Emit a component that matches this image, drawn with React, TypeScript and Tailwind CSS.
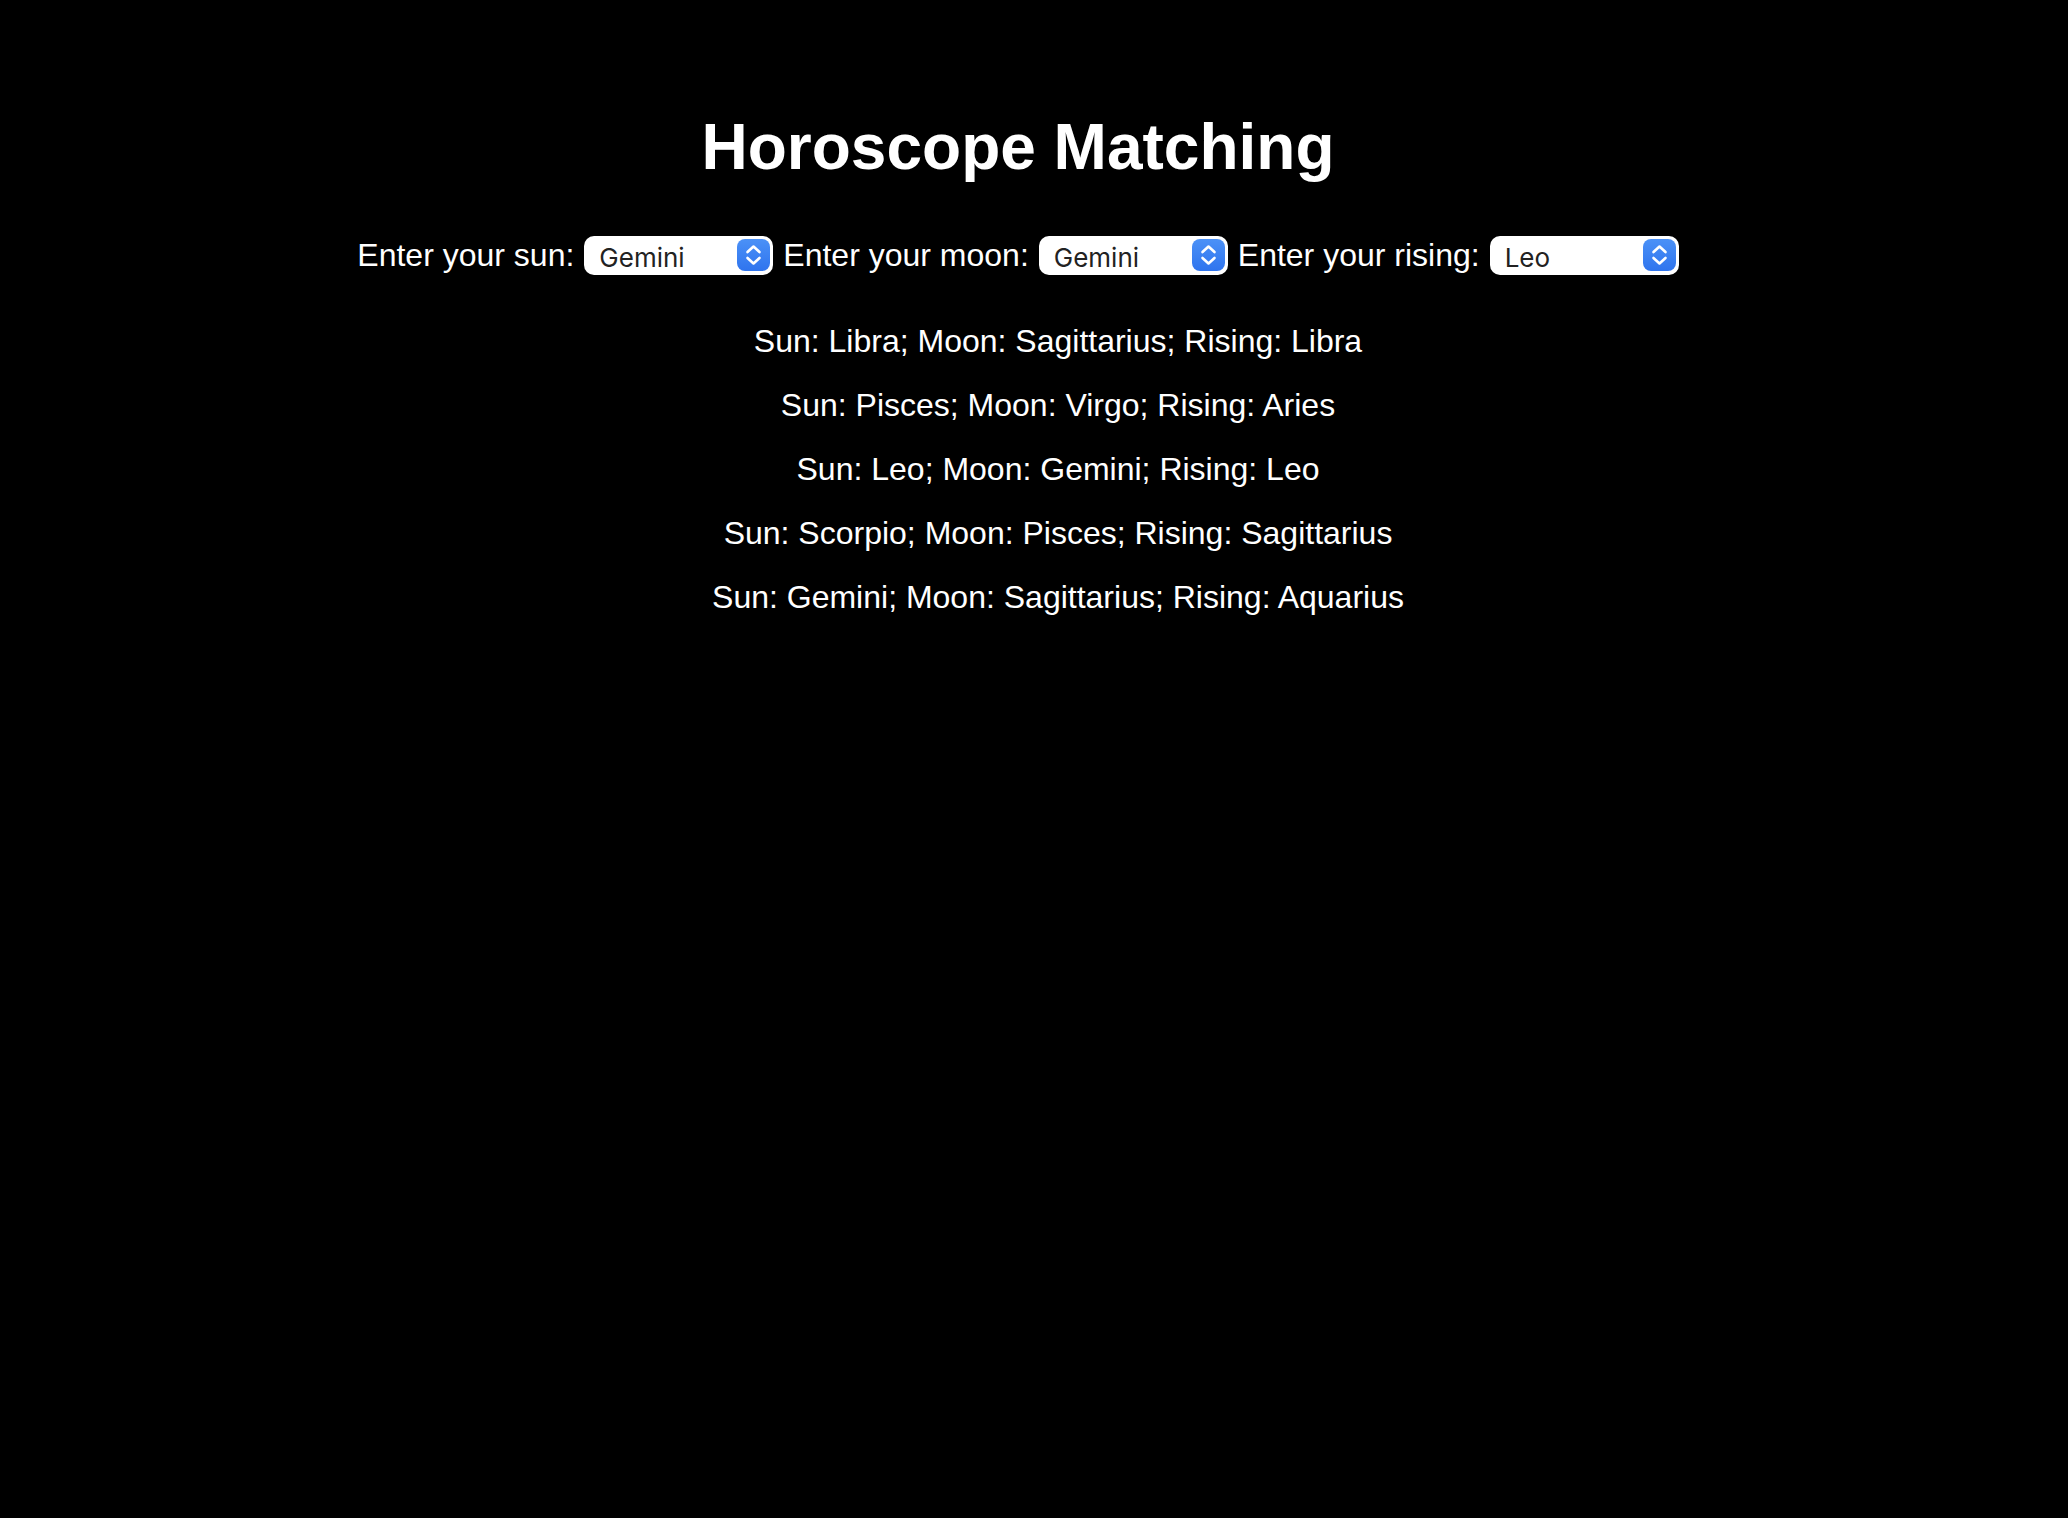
import React from "react";

function Select({ value }: { value: string }) {
  return (
    <div className="flex h-[39px] w-[189px] items-center justify-between rounded-[10px] bg-white pl-[15px] pr-[3px]">
      <span className="pt-[5px] text-[26px] leading-none text-[#222222]" style={{ fontFamily: 'Inter, "Liberation Sans", sans-serif' }}>
        {value}
      </span>
      <div className="flex h-[32px] w-[33px] items-center justify-center rounded-[8px] bg-gradient-to-b from-[#4b91f7] to-[#2f74ee]">
        <svg width="33" height="32" viewBox="0 0 33 32" fill="none">
          <path d="M10.5 13 L16.5 7.5 L22.5 13" stroke="white" strokeWidth="2.6" strokeLinecap="round" strokeLinejoin="round" />
          <path d="M10.5 19 L16.5 24.5 L22.5 19" stroke="white" strokeWidth="2.6" strokeLinecap="round" strokeLinejoin="round" />
        </svg>
      </div>
    </div>
  );
}

const results = [
  "Sun: Libra; Moon: Sagittarius; Rising: Libra",
  "Sun: Pisces; Moon: Virgo; Rising: Aries",
  "Sun: Leo; Moon: Gemini; Rising: Leo",
  "Sun: Scorpio; Moon: Pisces; Rising: Sagittarius",
  "Sun: Gemini; Moon: Sagittarius; Rising: Aquarius",
];

export default function App() {
  return (
    <div
      className="min-h-screen w-full bg-black pr-[32px] text-white"
      style={{ fontFamily: '"Liberation Sans", Arial, Helvetica, sans-serif' }}
    >
      <div className="flex flex-col items-center pt-[110px] text-center">
        <h1 className="text-[64px] font-bold leading-[74px]">Horoscope Matching</h1>
        <div className="mt-[51px] flex h-[40px] items-center justify-center gap-[10px] text-[32px] leading-[40px]">
          <span>Enter your sun:</span>
          <Select value="Gemini" />
          <span>Enter your moon:</span>
          <Select value="Gemini" />
          <span>Enter your rising:</span>
          <Select value="Leo" />
        </div>
        <div className="mt-[50px] flex w-full flex-col items-center gap-[32px] pl-[80px] text-[32px] leading-[32px]">
          {results.map((r) => (
            <div key={r}>{r}</div>
          ))}
        </div>
      </div>
    </div>
  );
}
